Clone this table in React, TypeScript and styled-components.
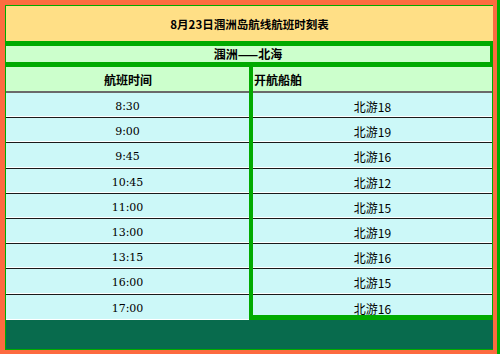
import styled, { createGlobalStyle } from 'styled-components';

const GlobalStyle = createGlobalStyle`
  html, body {
    margin: 0;
    padding: 0;
    background: #fd6b40;
  }
  * { box-sizing: border-box; }
`;

const schedule = [
  { time: '8:30', ship: '北游18' },
  { time: '9:00', ship: '北游19' },
  { time: '9:45', ship: '北游16' },
  { time: '10:45', ship: '北游12' },
  { time: '11:00', ship: '北游15' },
  { time: '13:00', ship: '北游19' },
  { time: '13:15', ship: '北游16' },
  { time: '16:00', ship: '北游15' },
  { time: '17:00', ship: '北游16' },
];

const Frame = styled.div`
  width: 500px;
  height: 354px;
  background: #fd6b40;
  border-right: 3px solid #00aa00;
  padding: 5px 4px 4px 5px;
`;

const Table = styled.div`
  display: flex;
  flex-direction: column;
  height: 100%;
  border-left: 1px solid #00aa00;
  border-top: 1px solid #00aa00;
  border-bottom: 1px solid #00aa00;
  font-family: "Noto Sans CJK SC", "Liberation Sans", sans-serif;
  font-size: 12px;
  color: #000;
`;

const Title = styled.div`
  height: 35px;
  background: #ffdf86;
  display: flex;
  align-items: center;
  justify-content: center;
  font-weight: bold;
  font-size: 11.5px;
`;

const Route = styled.div`
  height: 26px;
  background: #ccffcc;
  border-top: 5px solid #00aa00;
  border-bottom: 5px solid #00aa00;
  border-right: 3px solid #00aa00;
  display: flex;
  align-items: center;
  justify-content: center;
  padding-bottom: 1px;
  font-weight: bold;
`;

const Body = styled.div`
  height: 253px;
  display: grid;
  grid-template-columns: 243px 1fr;
`;

const Column = styled.div<{ $framed?: boolean }>`
  display: flex;
  flex-direction: column;
  overflow: hidden;
  ${({ $framed }) => $framed && `
    border-left: 4px solid #00aa00;
    border-right: 1px solid #00aa00;
    border-bottom: 5px solid #00aa00;
  `}
`;

const Head = styled.div<{ $align: 'center' | 'flex-start' }>`
  height: 26px;
  flex: none;
  background: #ccffcc;
  border-bottom: 2px solid #6a6a6a;
  display: flex;
  align-items: center;
  justify-content: ${({ $align }) => $align};
  padding-left: 1px;
  font-weight: bold;
`;

const Cell = styled.div<{ $serif?: boolean }>`
  flex: 0 0 25.2px;
  background: #ccf8f8;
  border-bottom: 1px solid #1a1a1a;
  box-shadow: inset 0 -1px 0 #ffffff;
  display: flex;
  align-items: center;
  justify-content: center;
  padding-top: 3px;
  font-family: ${({ $serif }) => $serif
    ? '"DejaVu Serif", "Liberation Serif", serif'
    : '"Noto Sans CJK SC", "Liberation Sans", sans-serif'};
  font-size: ${({ $serif }) => $serif ? '11px' : '12px'};
  &:last-child { border-bottom: none; }
`;

const Footer = styled.div`
  flex: 1;
  background: #086b4d;
`;

export default function App() {
  return (
    <>
      <GlobalStyle />
      <Frame>
        <Table>
          <Title>8月23日涠洲岛航线航班时刻表</Title>
          <Route>涠洲——北海</Route>
          <Body>
            <Column>
              <Head $align="center">航班时间</Head>
              {schedule.map((r) => (
                <Cell key={r.time} $serif>{r.time}</Cell>
              ))}
            </Column>
            <Column $framed>
              <Head $align="flex-start">开航船舶</Head>
              {schedule.map((r) => (
                <Cell key={r.time}>{r.ship}</Cell>
              ))}
            </Column>
          </Body>
          <Footer />
        </Table>
      </Frame>
    </>
  );
}
